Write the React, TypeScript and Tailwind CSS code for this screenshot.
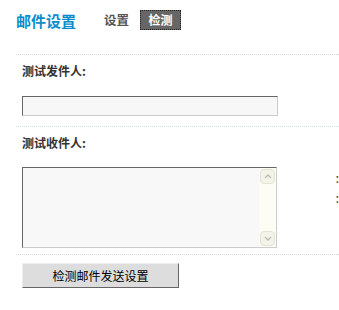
import React from 'react';

const font = '[font-family:"Noto_Sans_CJK_SC","Liberation_Sans",sans-serif]';

const App: React.FC = () => {
  return (
    <div className={`w-[339px] h-[310px] bg-white overflow-hidden ${font} text-[12px]`}>
      {/* 标题栏 */}
      <div className="ml-4 h-[55px] border-b border-dotted border-[#d4d4d4]">
        <div className="flex items-center pt-[10px] h-[30px]">
          <span className="text-[15px] font-bold text-[#0b8dcc] leading-none">邮件设置</span>
          <span className="ml-[28px] text-[12.5px] font-bold text-[#555] leading-none">设置</span>
          <span className="ml-[11px] h-[20px] w-[41px] flex items-center justify-center bg-[#666] border border-dotted border-[#222] text-white font-bold leading-none">
            检测
          </span>
        </div>
      </div>

      {/* 测试发件人 */}
      <div className="ml-4 h-[72px] border-b border-dotted border-[#cfe3ee]">
        <div className="pl-[6px] pt-[8px] leading-[16px] font-bold text-[#333]">测试发件人:</div>
        <input
          className="ml-[6px] mt-[17px] block w-[256px] h-[20px] bg-[#f7f7f7] border border-[#ccc] border-t-[#666] border-l-[#666] outline-none"
        />
      </div>

      {/* 测试收件人 */}
      <div className="ml-4 h-[128px] border-b border-dotted border-[#d4d4d4]">
        <div className="pl-[6px] pt-[8px] leading-[16px] font-bold text-[#333]">测试收件人:</div>
        <div className="flex mt-[16px]">
          <div className="ml-[6px] w-[256px] h-[81px] flex bg-[#f8f8f8] border border-[#ccc] border-t-[#666] border-l-[#666]">
            <textarea className="flex-1 resize-none bg-transparent outline-none" />
            <div className="w-[17px] flex flex-col justify-between bg-[#fdfdf5] p-px">
              <div className="h-[15px] flex items-center justify-center bg-[#f3f3e8] border border-[#e2e2d6] rounded-sm">
                <svg width="8" height="5" viewBox="0 0 8 5"><path d="M1 4 L4 1 L7 4" fill="none" stroke="#bbb" strokeWidth="1.3" /></svg>
              </div>
              <div className="h-[15px] flex items-center justify-center bg-[#f3f3e8] border border-[#e2e2d6] rounded-sm">
                <svg width="8" height="5" viewBox="0 0 8 5"><path d="M1 1 L4 4 L7 1" fill="none" stroke="#bbb" strokeWidth="1.3" /></svg>
              </div>
            </div>
          </div>
          <div className="ml-[58px] mt-[1px] flex flex-col text-[13px] leading-[20px] text-[#444]">
            <span>:</span>
            <span>:</span>
          </div>
        </div>
      </div>

      {/* 按钮 */}
      <button className="ml-[22px] mt-[8px] w-[157px] h-[25px] bg-[#ddd] border border-[#eee] border-r-[#666] border-b-[#666] text-[12px] text-black leading-none">
        检测邮件发送设置
      </button>
    </div>
  );
};

export default App;
